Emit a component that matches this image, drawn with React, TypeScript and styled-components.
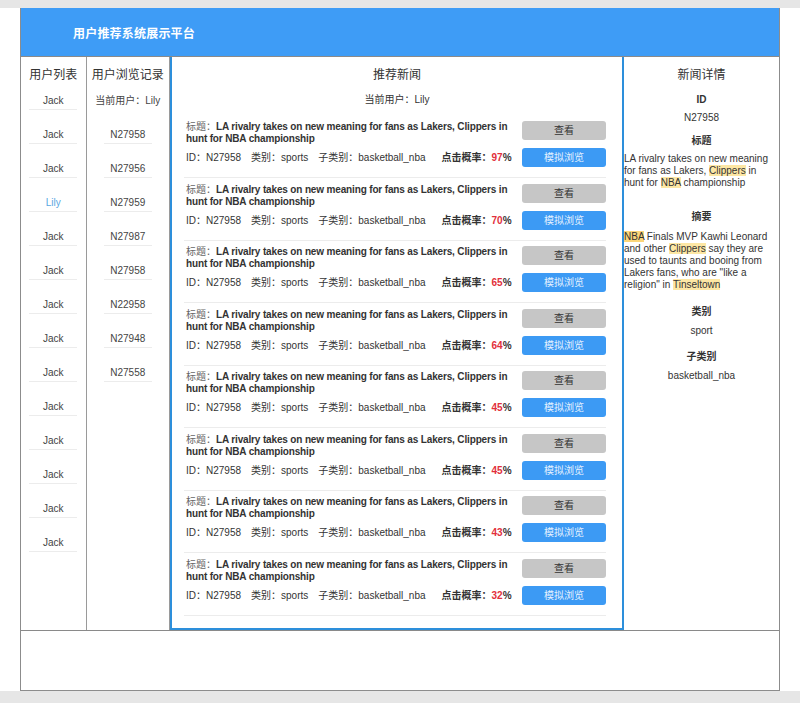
import React from "react";
import styled, { createGlobalStyle } from "styled-components";

const GlobalStyle = createGlobalStyle`
  html, body {
    margin: 0;
    padding: 0;
    background: #ffffff;
  }
  body {
    font-family: "Liberation Sans", "Noto Sans CJK SC", sans-serif;
    color: #333333;
  }
  * {
    box-sizing: border-box;
  }
`;

const Page = styled.div`
  width: 800px;
  height: 703px;
  display: flex;
  flex-direction: column;
  overflow: hidden;
`;

const GrayBand = styled.div<{ $h: number }>`
  height: ${(p) => p.$h}px;
  background: #e6e6e6;
  flex-shrink: 0;
`;

const Frame = styled.div`
  margin: 0 20px;
  flex: 1;
  display: flex;
  flex-direction: column;
  border: 1px solid #8c8c8c;
  border-top: none;
`;

const Header = styled.div`
  height: 48px;
  flex-shrink: 0;
  background: #3e9cf6;
  color: #ffffff;
  display: flex;
  align-items: center;
  padding-left: 52px;
  font-size: 12px;
  font-weight: 700;
  letter-spacing: 0.2px;
`;

const Body = styled.div`
  height: 575px;
  flex-shrink: 0;
  display: flex;
  border-top: 1px solid #8a8a8a;
  border-bottom: 1px solid #8a8a8a;
`;

const Column = styled.div<{ $w: number }>`
  width: ${(p) => p.$w}px;
  flex-shrink: 0;
  border-right: 1.5px solid #9a9a9a;
  display: flex;
  flex-direction: column;
  align-items: center;
`;

const ColumnTitle = styled.div`
  padding-top: 9px;
  font-size: 12px;
  line-height: 18px;
  color: #333333;
  white-space: nowrap;
`;

const List = styled.div`
  margin-top: 9px;
  display: flex;
  flex-direction: column;
  align-items: center;
`;

const ListItem = styled.div<{ $active?: boolean; $plain?: boolean }>`
  width: ${(p) => (p.$plain ? "auto" : "48px")};
  text-align: center;
  font-size: 10px;
  line-height: 16px;
  white-space: nowrap;
  color: ${(p) => (p.$active ? "#5aa8e2" : "#444444")};
  border-bottom: 1px solid ${(p) => (p.$plain ? "transparent" : "#ececec")};
  margin-bottom: 17px;
`;

const NewsPanel = styled.div`
  width: 454px;
  flex-shrink: 0;
  border: 2px solid #2d8fdb;
  border-top: none;
  display: flex;
  flex-direction: column;
  align-items: center;
`;

const CurrentUser = styled.div`
  margin-top: 9px;
  font-size: 10px;
  line-height: 14px;
`;

const CardList = styled.div`
  align-self: stretch;
  margin: 8.5px 16px 0 12px;
  display: flex;
  flex-direction: column;
`;

const Card = styled.div`
  display: flex;
  justify-content: space-between;
  padding: 5.5px 0 10px;
  border-bottom: 1px solid #ececec;
`;

const CardMain = styled.div`
  width: 330px;
  padding-left: 2px;
`;

const CardTitle = styled.div`
  font-size: 10px;
  line-height: 12px;
  font-weight: 700;
  letter-spacing: -0.15px;
  color: #333333;
`;

const Label = styled.span`
  font-weight: 400;
  letter-spacing: 0;
  color: #666666;
`;

const Meta = styled.div`
  margin-top: 7px;
  display: flex;
  gap: 10px;
  font-size: 10px;
  line-height: 12px;
  white-space: nowrap;
`;

const Prob = styled.span`
  margin-left: 6px;
  font-weight: 700;
`;

const ProbValue = styled.span`
  color: #e2303b;
`;

const Buttons = styled.div`
  width: 84px;
  display: flex;
  flex-direction: column;
  gap: 8px;
`;

const Button = styled.div<{ $primary?: boolean }>`
  height: 19px;
  border-radius: 3px;
  background: ${(p) => (p.$primary ? "#3c9af4" : "#c6c6c6")};
  color: ${(p) => (p.$primary ? "#e4f1ff" : "#333333")};
  font-size: 10px;
  line-height: 19px;
  text-align: center;
`;

const DetailPanel = styled.div`
  flex: 1;
  display: flex;
  flex-direction: column;
  align-items: center;
`;

const DetailLabel = styled.div<{ $mt: number }>`
  margin-top: ${(p) => p.$mt}px;
  font-size: 10px;
  line-height: 14px;
  font-weight: 700;
`;

const DetailValue = styled.div<{ $mt?: number }>`
  margin-top: ${(p) => p.$mt ?? 4}px;
  font-size: 10px;
  line-height: 14px;
`;

const DetailText = styled.div<{ $mt: number }>`
  align-self: stretch;
  margin-top: ${(p) => p.$mt}px;
  padding-right: 6px;
  font-size: 10px;
  line-height: 12px;
  color: #333333;
`;

const Mark = styled.span<{ $strong?: boolean }>`
  background: ${(p) => (p.$strong ? "#fbd67a" : "#fde7a4")};
`;

const Footer = styled.div`
  flex: 1;
`;

const users = [
  "Jack", "Jack", "Jack", "Lily", "Jack", "Jack", "Jack",
  "Jack", "Jack", "Jack", "Jack", "Jack", "Jack", "Jack",
];

const history = [
  "N27958", "N27956", "N27959", "N27987", "N27958", "N22958", "N27948", "N27558",
];

const probs = [97, 70, 65, 64, 45, 45, 43, 32];

const NewsCard: React.FC<{ prob: number }> = ({ prob }) => (
  <Card>
    <CardMain>
      <CardTitle>
        <Label>标题：</Label>LA rivalry takes on new meaning for fans as Lakers,
        Clippers in hunt for NBA championship
      </CardTitle>
      <Meta>
        <span>ID：N27958</span>
        <span>类别：sports</span>
        <span>子类别：basketball_nba</span>
        <Prob>
          点击概率：<ProbValue>{prob}</ProbValue>%
        </Prob>
      </Meta>
    </CardMain>
    <Buttons>
      <Button>查看</Button>
      <Button $primary>模拟浏览</Button>
    </Buttons>
  </Card>
);

export default function App() {
  return (
    <Page>
      <GlobalStyle />
      <GrayBand $h={8} />
      <Frame>
        <Header>用户推荐系统展示平台</Header>
        <Body>
          <Column $w={65.5}>
            <ColumnTitle>用户列表</ColumnTitle>
            <List>
              {users.map((u, i) => (
                <ListItem key={i} $active={u === "Lily"}>
                  {u}
                </ListItem>
              ))}
            </List>
          </Column>
          <Column $w={83.5}>
            <ColumnTitle>用户浏览记录</ColumnTitle>
            <List>
              <ListItem $plain>当前用户：Lily</ListItem>
              {history.map((h, i) => (
                <ListItem key={i}>{h}</ListItem>
              ))}
            </List>
          </Column>
          <NewsPanel>
            <ColumnTitle>推荐新闻</ColumnTitle>
            <CurrentUser>当前用户：Lily</CurrentUser>
            <CardList>
              {probs.map((p, i) => (
                <NewsCard key={i} prob={p} />
              ))}
            </CardList>
          </NewsPanel>
          <DetailPanel>
            <ColumnTitle>新闻详情</ColumnTitle>
            <DetailLabel $mt={9}>ID</DetailLabel>
            <DetailValue>N27958</DetailValue>
            <DetailLabel $mt={9}>标题</DetailLabel>
            <DetailText $mt={5}>
              LA rivalry takes on new meaning for fans as Lakers,{" "}
              <Mark>Clippers</Mark> in hunt for <Mark>NBA</Mark> championship
            </DetailText>
            <DetailLabel $mt={21}>摘要</DetailLabel>
            <DetailText $mt={7}>
              <Mark $strong>NBA</Mark> Finals MVP Kawhi Leonard and other{" "}
              <Mark>Clippers</Mark> say they are used to taunts and booing from
              Lakers fans, who are "like a religion" in <Mark>Tinseltown</Mark>
            </DetailText>
            <DetailLabel $mt={14}>类别</DetailLabel>
            <DetailValue $mt={5}>sport</DetailValue>
            <DetailLabel $mt={12}>子类别</DetailLabel>
            <DetailValue $mt={5}>basketball_nba</DetailValue>
          </DetailPanel>
        </Body>
        <Footer />
      </Frame>
      <GrayBand $h={12} />
    </Page>
  );
}
